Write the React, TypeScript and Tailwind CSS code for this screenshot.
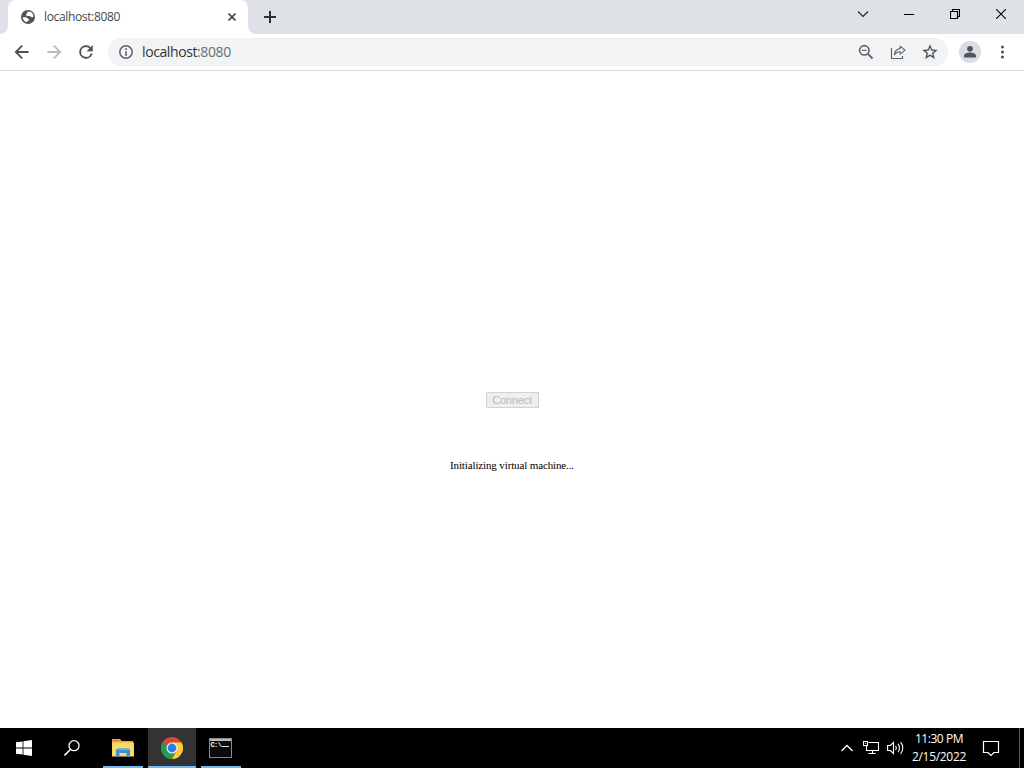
import type { ReactNode } from 'react';

function Icon({ size = 16, box = 24, className = '', children }: { size?: number; box?: number; className?: string; children: ReactNode }) {
  return (
    <svg width={size} height={size} viewBox={`0 0 ${box} ${box}`} className={`shrink-0 ${className}`} fill="currentColor" aria-hidden="true">
      {children}
    </svg>
  );
}

function TabStrip() {
  return (
    <div className="flex h-[34px] bg-[#dee1e6]">
      <div className="w-2 bg-white"><div className="h-full rounded-br-lg bg-[#dee1e6]" /></div>
      <div className="bg-[#dee1e6]">
        <div className="flex h-[34px] w-60 items-center rounded-t-lg bg-white pl-[13px] pr-[11px] text-[#45494d]">
          <Icon size={14} box={14} className="text-[#505458]">
            <circle cx="7" cy="7" r="7" />
            <path d="M1.7 7.3h3.1c1.3 0 2 .7 2 1.8h1.1v1.6H6.2v1.5C3.6 11.9 1.7 9.9 1.7 7.3zM6.3 1.8h3c2 .9 3.2 2.7 3.2 4.7-.5.7-1.2.9-1.9.7-.8 0-1-.6-1.4-1.2H6.4c-1 0-1.4-.6-1.4-1.4 0-.7.5-1.1 1.3-1.1z" fill="#fff" />
          </Icon>
          <span className="ml-[9px] flex-1 text-xs tracking-[-0.35px]">localhost:8080</span>
          <Icon size={10} box={10} className="text-[#3c4043]">
            <path d="M1.5 1.5l7 7M8.5 1.5l-7 7" stroke="currentColor" strokeWidth="1.7" />
          </Icon>
        </div>
      </div>
      <div className="flex flex-1 bg-white">
        <div className="flex flex-1 items-center rounded-bl-lg bg-[#dee1e6] pl-4">
          <Icon size={12} box={12} className="text-[#2f3337]">
            <path d="M6 0v12M0 6h12" stroke="currentColor" strokeWidth="2" />
          </Icon>
          <div className="ml-auto flex h-7 items-center self-start text-[#202124]">
            <div className="flex w-[46px] justify-center">
              <Icon size={12} box={12}><path d="M1 3.5l5 5 5-5" fill="none" stroke="currentColor" strokeWidth="1.1" /></Icon>
            </div>
            <div className="flex w-[46px] justify-center">
              <Icon size={10} box={10}><path d="M0 5.5h10" stroke="#000" /></Icon>
            </div>
            <div className="flex w-[46px] justify-center">
              <Icon size={10} box={10}><path d="M.5 2.5h7v7h-7zM2.5 2.5v-2h7v7h-2" fill="none" stroke="#000" strokeWidth="1.15" /></Icon>
            </div>
            <div className="flex w-[46px] justify-center">
              <Icon size={10} box={10}><path d="M0 0l10 10M10 0L0 10" stroke="#000" strokeWidth="1.1" /></Icon>
            </div>
          </div>
        </div>
      </div>
    </div>
  );
}

function Toolbar() {
  return (
    <div className="flex h-[37px] items-center border-b border-[#d9dbde] pl-3.5 text-[#5f6368]">
      <Icon size={16} box={16} className="text-[#4d5156]">
        <path d="M14.6 8H2M8.2 1.6L1.8 8l6.4 6.4" fill="none" stroke="currentColor" strokeWidth="1.8" />
      </Icon>
      <Icon size={16} box={16} className="ml-4 text-[#b8babd]">
        <path d="M1.4 8H14M7.8 1.6L14.2 8l-6.4 6.4" fill="none" stroke="currentColor" strokeWidth="1.8" />
      </Icon>
      <Icon size={20} className="ml-3.5 text-[#4d5156]">
        <path d="M17.65 6.35A7.958 7.958 0 0 0 12 4a8 8 0 1 0 7.73 10h-2.08A6 6 0 1 1 12 6c1.66 0 3.14.69 4.22 1.78L13 11h7V4l-2.35 2.35z" stroke="currentColor" strokeWidth=".3" />
      </Icon>
      <div className="ml-3 flex h-7 w-[840px] items-center rounded-full bg-[#f1f3f4] pl-2.5 pr-[9px]">
        <Icon size={16} box={16}>
          <circle cx="8" cy="8" r="6.2" fill="none" stroke="currentColor" strokeWidth="1.5" />
          <path d="M7.2 7.2h1.6V12H7.2zM7.2 4.2h1.6v1.7H7.2z" />
        </Icon>
        <span className="ml-2 flex-1 text-sm leading-5 tracking-[-0.4px] text-[#303438]">
          localhost<span className="text-[#6a6e73]">:8080</span>
        </span>
        <Icon size={16} box={16}>
          <circle cx="6.3" cy="6.3" r="4.7" fill="none" stroke="currentColor" strokeWidth="1.6" />
          <path d="M4 6.3h4.6" stroke="currentColor" strokeWidth="1.2" />
          <path d="M9.7 9.7l4.8 4.8" stroke="currentColor" strokeWidth="1.9" />
        </Icon>
        <Icon size={16} box={16} className="ml-4">
          <path d="M1.5 4v10.5h11V12" fill="none" stroke="currentColor" strokeWidth="1.2" />
          <path d="M10.2 2.2l4.8 4-4.8 4V7.8C7.5 7.8 5.7 8.700 4.300 10.700c.4-3.400 2.500-5.700 5.900-6.100z" fill="none" stroke="currentColor" strokeWidth="1.1" strokeLinejoin="round" />
        </Icon>
        <Icon size={18} className="ml-[15px] text-[#4d5156]">
          <path d="M22 9.24l-7.19-.62L12 2 9.19 8.63 2 9.24l5.46 4.73L5.82 21 12 17.27 18.18 21l-1.63-7.03L22 9.24zM12 15.4l-3.76 2.27 1-4.28-3.32-2.88 4.38-.38L12 6.1l1.71 4.04 4.38.38-3.32 2.88 1 4.28L12 15.4z" stroke="currentColor" strokeWidth=".3" />
        </Icon>
      </div>
      <div className="ml-[11px] flex h-[22px] w-[22px] items-center justify-center rounded-full bg-[#dadce3] text-[#4b5260]">
        <Icon size={12} box={12}>
          <circle cx="6" cy="2.8" r="2.8" />
          <path d="M0 11.5V9.7c0-2 3.8-3.1 6-3.1s6 1.1 6 3.1v1.8z" />
        </Icon>
      </div>
      <Icon size={16} box={16} className="ml-[13px] text-[#4d5156]">
        <circle cx="8.5" cy="3" r="1.5" />
        <circle cx="8.5" cy="8" r="1.5" />
        <circle cx="8.5" cy="13" r="1.5" />
      </Icon>
    </div>
  );
}

function Taskbar() {
  return (
    <div className="flex h-10 bg-black text-white">
      <div className="flex w-12 items-center justify-center">
        <Icon size={16} box={16}>
          <path d="M0 2.3l6.6-.9v6.2H0zM7.4 1.2L16 0v7.6H7.4zM0 8.4h6.6v6.2L0 13.7zM7.4 8.4H16V16l-8.6-1.2z" />
        </Icon>
      </div>
      <div className="flex w-12 items-center justify-center">
        <Icon size={16} box={16}>
          <circle cx="10" cy="5.7" r="5" fill="none" stroke="currentColor" strokeWidth="1.3" />
          <path d="M6.4 9.5L.5 15.4" stroke="currentColor" strokeWidth="1.5" />
        </Icon>
      </div>
      <div className="flex w-[52px] justify-center pl-1.5 pr-[5px]">
        <div className="flex w-10 items-center justify-center border-b-2 border-[#76b9ed] pt-0.5">
          <svg width="22" height="18" viewBox="0 0 22 18" aria-hidden="true">
            <path d="M0 0h8l1.5 2H21v5H0z" fill="#e5ad3c" />
            <path d="M1.5 1h5v1h-5z" fill="#e96f3e" />
            <path d="M0 3.5h22v14H0z" fill="#fbd86c" />
            <path d="M4 18v-7l1.5-1.500h11L18 11v7h-3.500v-4h-7v4z" fill="#3f91cd" />
            <path d="M5.5 9.500h11V11h-11z" fill="#69b2df" />
          </svg>
        </div>
      </div>
      <div className="flex w-12 items-center justify-center border-b-2 border-[#76b9ed] bg-[#333]">
        <svg width="24" height="24" viewBox="0 0 24 24" className="mt-0.5" aria-hidden="true">
          <circle cx="12" cy="12" r="11" fill="#dc4437" />
          <path d="M12 12L2.47 6.5A11 11 0 0 0 12 23l5-8.4z" fill="#249b53" />
          <path d="M12 6.5h9.53A11 11 0 0 1 12 23l4.76-8.25z" fill="#fbcf35" />
          <circle cx="12" cy="12" r="5.5" fill="#f4f7fa" />
          <circle cx="12" cy="12" r="4.4" fill="#347de0" />
        </svg>
      </div>
      <div className="flex w-[50px] justify-center">
        <div className="flex w-10 items-center justify-center border-b-2 border-[#76b9ed]">
          <div className="mr-0.5 mt-0.5 flex h-5 w-[23px] flex-col border border-[#8a8a8a] bg-[#0b0b0b]">
            <div className="h-[2px] shrink-0 bg-[#bcbcbc]" />
            <div className="flex pl-px">
              <span className="font-['Liberation_Mono'] text-[7px] font-bold leading-[8px] tracking-[-0.6px]">C:\</span>
              <div className="ml-px mt-[5px] h-px w-[7px] bg-[#ddd]" />
            </div>
          </div>
        </div>
      </div>
      <div className="ml-auto flex items-center">
        <Icon size={12} box={12}><path d="M.5 9L6 3.5 11.5 9" fill="none" stroke="currentColor" strokeWidth="1.3" /></Icon>
        <Icon size={16} box={16} className="ml-2.5">
          <path d="M5.5 2.500h10v8h-12V6M9.5 10.500v3M5.500 13.500h7M.5 1.500h4v4h-4z" fill="none" stroke="currentColor" strokeWidth="1.1" />
          <path d="M2 3h1v1H2z" />
        </Icon>
        <svg width="17" height="14" viewBox="0 0 17 14" className="ml-2" fill="none" stroke="currentColor" strokeWidth="1.1" aria-hidden="true">
          <path d="M.6 4.5h2.8l3.1-3v11l-3.1-3H.6zM8.5 5c1 1 1 3 0 4M11 3c2 2 2 6 0 8M13.5 1.2c3 3 3 8.600 0 11.600" />
        </svg>
        <div className="ml-1.5 flex w-[58px] flex-col items-center whitespace-nowrap pb-px text-xs leading-[18px]">
          <span className="tracking-[-0.45px]">11:30 PM</span>
          <span className="tracking-[-0.3px]">2/15/2022</span>
        </div>
        <Icon size={18} box={18} className="ml-3.5">
          <path d="M1.5 2.500h15v11H12l-3 3-3-3H1.500z" fill="none" stroke="currentColor" strokeWidth="1.2" />
        </Icon>
        <div className="ml-[19px] mr-1 h-10 w-px bg-[#555]" />
      </div>
    </div>
  );
}

export default function App() {
  return (
    <div className="flex h-screen w-screen flex-col overflow-hidden bg-white font-['Open_Sans','Noto_Sans',sans-serif]">
      <TabStrip />
      <Toolbar />
      <main className="flex flex-1 flex-col items-center pt-[321px]">
        <button disabled className="h-4 w-[53px] border border-[#d3d3d3] bg-[#efefef] font-['Liberation_Sans',Arial,sans-serif] text-[11px] leading-[15px] tracking-[-0.2px] text-[#b8b8b8]">
          Connect
        </button>
        <p className="mt-[51px] font-['Liberation_Serif','Times_New_Roman',serif] text-[11px] leading-[13px] tracking-[-0.13px] text-black">
          Initializing virtual machine...
        </p>
      </main>
      <Taskbar />
    </div>
  );
}
